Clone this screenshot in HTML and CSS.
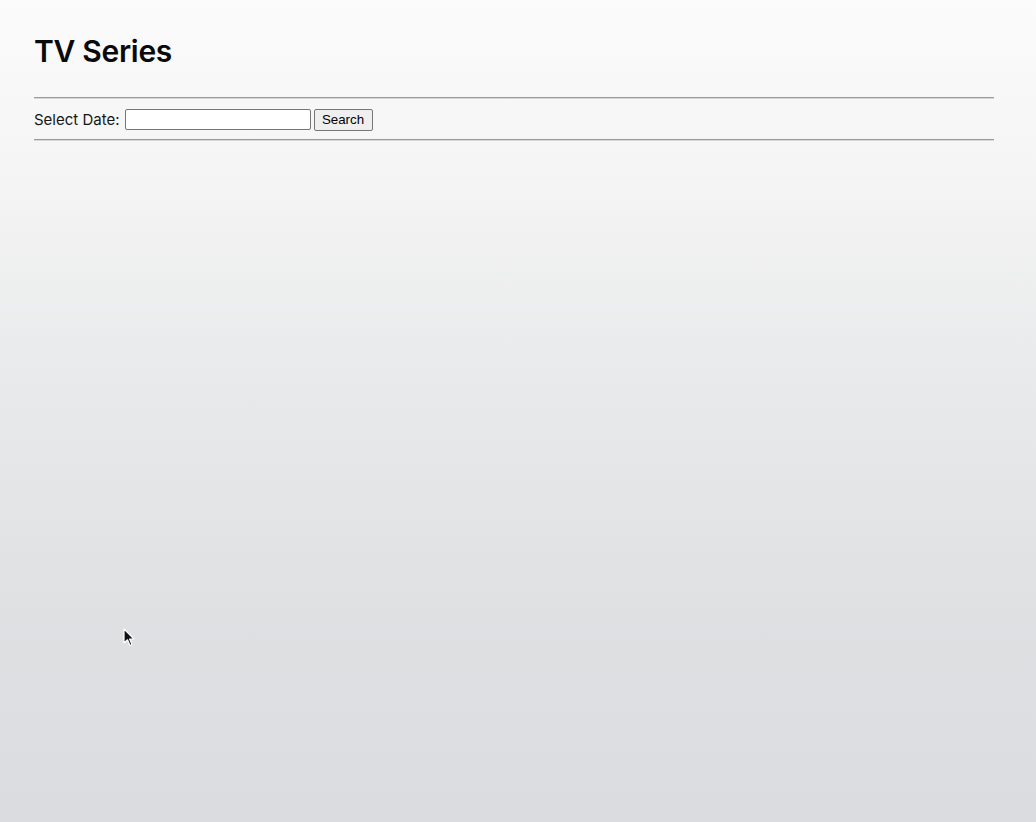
FILE: index.html
```html
<!DOCTYPE html>
<html lang="en">
<head>
<meta charset="utf-8">
<title>TV Series</title>
<link rel="stylesheet" href="styles.css">
</head>
<body>
<main class="page">
  <h1 class="title">TV Series</h1>
  <hr class="rule">
  <form class="search-row" onsubmit="return false">
    <label class="search-label" for="date">Select Date:</label>
    <input class="date-input" id="date" type="text">
    <button class="search-btn" type="submit">Search</button>
  </form>
  <hr class="rule">
</main>
<svg class="cursor" width="14" height="20" viewBox="0 0 14 20" aria-hidden="true">
  <path d="M1 1 L1 15 L4.5 11.8 L7 17.5 L9 16.6 L6.6 11 L11 11 Z" fill="#111" stroke="#fff" stroke-width="1.2" stroke-linejoin="round"/>
</svg>
</body>
</html>
```
FILE: styles.css
```css
html, body {
  margin: 0;
  padding: 0;
  min-height: 100%;
}
body {
  min-height: 822px;
  background: linear-gradient(to bottom, #fbfbfb 0%, #f5f5f5 20%, #e9eaeb 45%, #dfe0e2 75%, #dbdce0 100%);
  font-family: "Inter", "Liberation Sans", sans-serif;
  color: #111;
  position: relative;
}
.page {
  width: 960px;
  padding: 0 0 0 34px;
}
.title {
  margin: 0;
  padding-top: 32px;
  font-size: 30px;
  font-weight: 600;
  line-height: 38px;
  letter-spacing: -0.3px;
  color: #0a0a0a;
}
.rule {
  margin: 0;
  border: 0;
  border-top: 1px solid #9a9a9a;
  border-bottom: 1px solid #d8d8d8;
  height: 0;
}
.page > .rule:first-of-type {
  margin-top: 27px;
}
.search-row {
  display: flex;
  align-items: center;
  height: 40px;
  margin: 0;
}
.search-label {
  font-size: 15px;
  color: #161616;
  margin-right: 5px;
}
.date-input {
  box-sizing: border-box;
  width: 186px;
  height: 21px;
  padding: 1px 2px;
  border: 1px solid #767676;
  border-radius: 2px;
  background: #fff;
  margin: 0 3px 0 0;
  font-size: 13px;
}
.search-btn {
  box-sizing: border-box;
  font-family: "Liberation Sans", Arial, sans-serif;
  font-size: 13.33px;
  width: 59px;
  height: 22px;
  padding: 1px 6px;
  border: 1px solid #767676;
  border-radius: 2px;
  background: #efefef;
  color: #000;
  margin-top: 1px;
}
.cursor {
  position: absolute;
  left: 123px;
  top: 628px;
}
```
